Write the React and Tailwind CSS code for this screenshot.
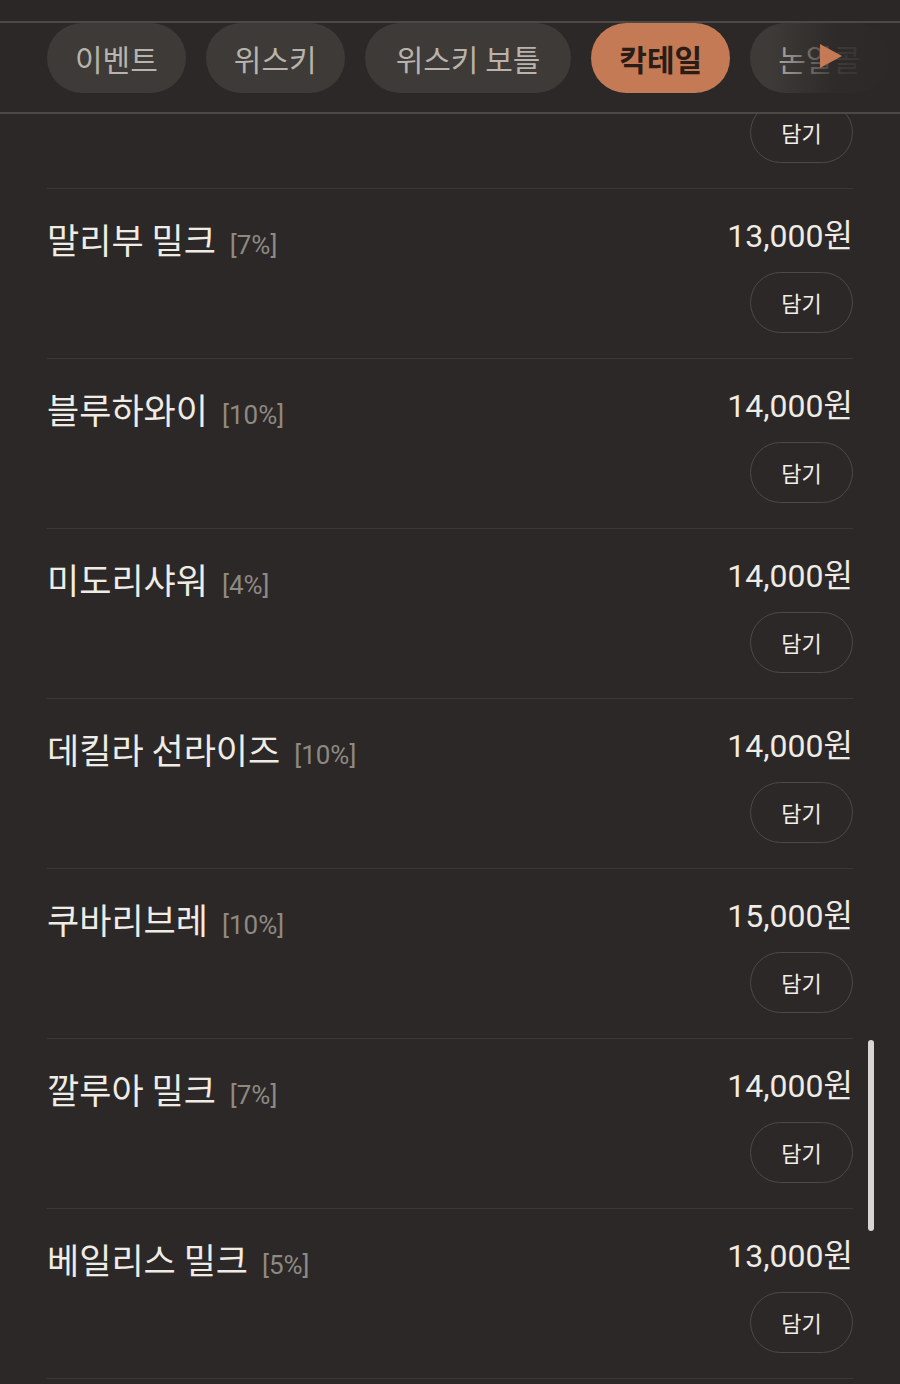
import React from "react";

const items = [
  { name: "", pct: "", price: "", partial: true },
  { name: "말리부 밀크", pct: "[7%]", price: "13,000원" },
  { name: "블루하와이", pct: "[10%]", price: "14,000원" },
  { name: "미도리샤워", pct: "[4%]", price: "14,000원" },
  { name: "데킬라 선라이즈", pct: "[10%]", price: "14,000원" },
  { name: "쿠바리브레", pct: "[10%]", price: "15,000원" },
  { name: "깔루아 밀크", pct: "[7%]", price: "14,000원" },
  { name: "베일리스 밀크", pct: "[5%]", price: "13,000원" },
];

const tabs = [
  { t: "이벤트", cls: "px-[28px] bg-[#3d3a37] text-[#b8b3ac]" },
  { t: "위스키", cls: "px-[28px] bg-[#3d3a37] text-[#b8b3ac]" },
  { t: "위스키 보틀", cls: "px-[31px] bg-[#3d3a37] text-[#b8b3ac]" },
  { t: "칵테일", cls: "px-[28px] bg-[#c47a55] text-[#2a1c16] font-bold" },
  { t: "논알콜", cls: "px-[28px] bg-[#3d3a37] text-[#b8b3ac]" },
];

function Row({ item }) {
  return (
    <div className="h-[170px] border-b border-[#3b3837] flex justify-between">
      <div className="pt-[28px] flex items-baseline">
        {item.name && (
          <>
            <span className="text-[35px] leading-[44px] text-[#efebe5]">{item.name}</span>
            <span className="ml-[14px] text-[26px] text-[#8e8983] font-['Roboto',sans-serif]">{item.pct}</span>
          </>
        )}
      </div>
      <div className="flex flex-col items-end pt-[32px]">
        <div className="h-[30px] text-[32px] leading-[30px] text-[#efebe5] font-['Roboto','Noto_Sans_CJK_KR',sans-serif]">
          {item.price || "\u00a0"}
        </div>
        <button className="mt-[21px] w-[103px] h-[61px] rounded-full border border-[#4d4947] text-[22px] text-[#f2eee8] flex items-center justify-center">
          담기
        </button>
      </div>
    </div>
  );
}

export default function App() {
  return (
    <div className="w-[900px] h-[1384px] bg-[#2b2827] overflow-hidden relative font-['Noto_Sans_CJK_KR',sans-serif]">
      <div className="h-[23px] bg-[#2a2726] border-b-2 border-[#4b4846]" />
      <div className="relative h-[91px] border-b-2 border-[#4b4846] overflow-hidden">
        <div className="flex gap-[20px] pl-[47px] pt-0">
          {tabs.map(({ t, cls }) => (
            <div
              key={t}
              className={"shrink-0 h-[70px] rounded-full text-[30px] flex items-center whitespace-nowrap " + cls}
            >
              {t}
            </div>
          ))}
        </div>
        <div className="absolute left-[770px] top-0 h-full w-[130px] bg-gradient-to-r from-[#2b282700] via-[#2b2827dd] to-[#2b2827]" />
        <svg className="absolute left-[818px] top-[20px]" width="26" height="26" viewBox="0 0 26 26">
          <polygon points="2,1 24,13 2,25" fill="#c47a55" />
        </svg>
      </div>
      <div className="h-[1269px] overflow-hidden px-[47px]">
        <div className="-mt-[95px] w-[806px]">
          {items.map((it, i) => (
            <Row key={i} item={it} />
          ))}
        </div>
      </div>
      <div className="absolute left-[868px] top-[1040px] w-[6px] h-[191px] rounded-full bg-[#d8d6d4]" />
    </div>
  );
}
